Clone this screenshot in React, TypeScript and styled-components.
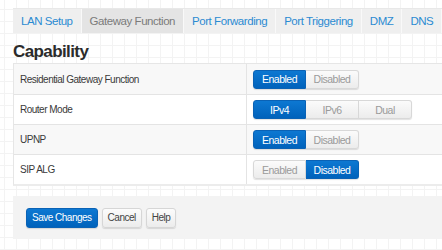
import React, { FC } from "react";
import styled, { createGlobalStyle } from "styled-components";

const font = `"Liberation Sans", Arial, sans-serif`;

const GlobalStyle = createGlobalStyle`
  html, body {
    margin: 0;
    padding: 0;
  }
  body {
    width: 442px;
    height: 250px;
    overflow: hidden;
    font-family: ${font};
    background-color: #ffffff;
    background-image:
      linear-gradient(to right, #f3f3f3 1px, transparent 1px),
      linear-gradient(to bottom, #f3f3f3 1px, transparent 1px);
    background-size: 12px 12px;
    background-position: 4px 9px;
  }
`;

const Page = styled.div`
  padding: 8px 0 0 13px;
`;

const Tabs = styled.div`
  display: flex;
  height: 25px;
  background: #efefef;
  border-top: 1px solid #e8e8e8;
  box-sizing: border-box;
  overflow: hidden;
`;

const Tab = styled.div<{ active?: boolean }>`
  display: flex;
  align-items: center;
  padding: 0 8px;
  font-size: 11.5px;
  letter-spacing: -0.45px;
  white-space: nowrap;
  color: ${(p) => (p.active ? "#7b7b7b" : "#2b8bd2")};
  background: ${(p) => (p.active ? "#e4e4e4" : "transparent")};
  border-right: 1px solid #f9f9f9;
`;

const Heading = styled.h2`
  margin: 9px 0 0;
  height: 21px;
  font-size: 17px;
  letter-spacing: -0.6px;
  font-weight: bold;
  color: #2b2b2b;
  line-height: 20px;
`;

const Table = styled.div`
  border-left: 1px solid #e6e6e6;
  border-bottom: 2px solid #ececec;
  border-top: 1px solid #e6e6e6;
`;

const Row = styled.div<{ striped?: boolean }>`
  display: grid;
  grid-template-columns: 233px 1fr;
  height: 30px;
  background: ${(p) => (p.striped ? "#f8f8f8" : "#ffffff")};
  border-top: 1px solid #e4e4e4;
  box-sizing: border-box;
  &:first-child {
    border-top: none;
  }
`;

const Label = styled.div`
  display: flex;
  align-items: center;
  padding-left: 6px;
  font-size: 10px;
  letter-spacing: -0.5px;
  color: #3a3a3a;
  border-right: 1px solid #e4e4e4;
`;

const Cell = styled.div`
  display: flex;
  align-items: center;
  padding-left: 6px;
`;

const Group = styled.div`
  display: flex;
  border-radius: 3px;
  box-shadow: 0 1px 1px rgba(0, 0, 0, 0.12);
`;

const Seg = styled.div<{ on?: boolean }>`
  width: 53px;
  height: 19px;
  box-sizing: border-box;
  display: flex;
  align-items: center;
  justify-content: center;
  font-size: 10.5px;
  letter-spacing: -0.5px;
  color: ${(p) => (p.on ? "#ffffff" : "#9a9a9a")};
  background: ${(p) =>
    p.on
      ? "linear-gradient(#0d78d2, #0062bb)"
      : "linear-gradient(#fbfbfb, #ececec)"};
  border: 1px solid ${(p) => (p.on ? "#0a62b5" : "#d8d8d8")};
  border-left-width: 0;
  &:first-child {
    border-left-width: 1px;
    border-radius: 3px 0 0 3px;
  }
  &:last-child {
    border-radius: 0 3px 3px 0;
  }
`;

const Footer = styled.div`
  margin-top: 10px;
  height: 43px;
  background: #f3f3f3;
  display: flex;
  align-items: center;
  gap: 4px;
  padding-left: 13px;
`;

const Btn = styled.button<{ primary?: boolean }>`
  height: 20px;
  padding: 0 5px;
  font-family: ${font};
  font-size: 10px;
  letter-spacing: -0.5px;
  border-radius: 3px;
  cursor: pointer;
  color: ${(p) => (p.primary ? "#ffffff" : "#444444")};
  background: ${(p) =>
    p.primary
      ? "linear-gradient(#0d78d2, #0062bb)"
      : "linear-gradient(#fcfcfc, #ececec)"};
  border: 1px solid ${(p) => (p.primary ? "#0a62b5" : "#d6d6d6")};
  box-shadow: 0 1px 1px rgba(0, 0, 0, 0.12);
`;

interface Setting {
  label: string;
  options: string[];
  selected: number;
}

const settings: Setting[] = [
  { label: "Residential Gateway Function", options: ["Enabled", "Disabled"], selected: 0 },
  { label: "Router Mode", options: ["IPv4", "IPv6", "Dual"], selected: 0 },
  { label: "UPNP", options: ["Enabled", "Disabled"], selected: 0 },
  { label: "SIP ALG", options: ["Enabled", "Disabled"], selected: 1 },
];

const tabs = ["LAN Setup", "Gateway Function", "Port Forwarding", "Port Triggering", "DMZ", "DNS"];

const App: FC = () => {
  return (
    <Page>
      <GlobalStyle />
      <Tabs>
        {tabs.map((t) => (
          <Tab key={t} active={t === "Gateway Function"}>
            {t}
          </Tab>
        ))}
      </Tabs>
      <Heading>Capability</Heading>
      <Table>
        {settings.map((s, i) => (
          <Row key={s.label} striped={i % 2 === 0}>
            <Label>{s.label}</Label>
            <Cell>
              <Group>
                {s.options.map((o, j) => (
                  <Seg key={o} on={j === s.selected}>
                    {o}
                  </Seg>
                ))}
              </Group>
            </Cell>
          </Row>
        ))}
      </Table>
      <Footer>
        <Btn primary>Save Changes</Btn>
        <Btn>Cancel</Btn>
        <Btn>Help</Btn>
      </Footer>
    </Page>
  );
};

export default App;
